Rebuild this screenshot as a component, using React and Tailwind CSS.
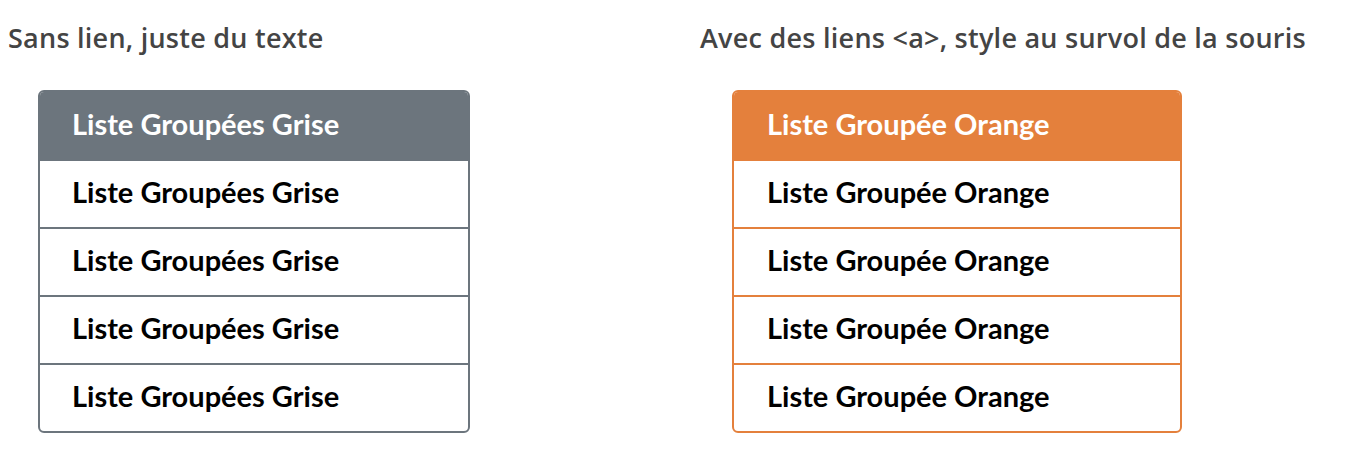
export default function App() {
  const gray = ["Liste Groupées Grise", "Liste Groupées Grise", "Liste Groupées Grise", "Liste Groupées Grise"];
  const orange = ["Liste Groupée Orange", "Liste Groupée Orange", "Liste Groupée Orange", "Liste Groupée Orange"];
  return (
    <div className="flex w-[1366px] h-[454px] bg-white pt-[22px]" style={{ fontFamily: "Lato, 'Open Sans', sans-serif" }}>
      <div className="w-[700px] pl-[8px]">
        <h2 className="text-[27px] leading-[32px] font-semibold tracking-[0.25px] text-[#444]" style={{ fontFamily: "'Open Sans', sans-serif" }}>Sans lien, juste du texte</h2>
        <div className="mt-[36px] ml-[30px] w-[432px] border-2 border-[#6c757d] rounded-[6px] overflow-hidden">
          <div className="h-[67px] flex items-center px-[32px] pb-[4px] bg-[#6c757d] text-white text-[29px] font-bold">Liste Groupées Grise</div>
          {gray.map((t, i) => (
            <div key={i} className="h-[68px] flex items-center px-[32px] pb-[4px] border-t-2 border-[#6c757d] text-black text-[29px] font-bold first:border-t-0">{t}</div>
          ))}
        </div>
      </div>
      <div className="w-[666px]">
        <h2 className="text-[27px] leading-[32px] font-semibold tracking-[0.25px] text-[#444]" style={{ fontFamily: "'Open Sans', sans-serif" }}>Avec des liens &lt;a&gt;, style au survol de la souris</h2>
        <div className="mt-[36px] ml-[32px] w-[450px] border-2 border-[#e4803c] rounded-[6px] overflow-hidden">
          <div className="h-[67px] flex items-center px-[33px] pb-[4px] bg-[#e4803c] text-white text-[29px] font-bold">Liste Groupée Orange</div>
          {orange.map((t, i) => (
            <a key={i} href="#" className="h-[68px] flex items-center px-[33px] pb-[4px] border-t-2 border-[#e4803c] text-black text-[29px] font-bold first:border-t-0 hover:bg-[#fdf0e6]">{t}</a>
          ))}
        </div>
      </div>
    </div>
  );
}
